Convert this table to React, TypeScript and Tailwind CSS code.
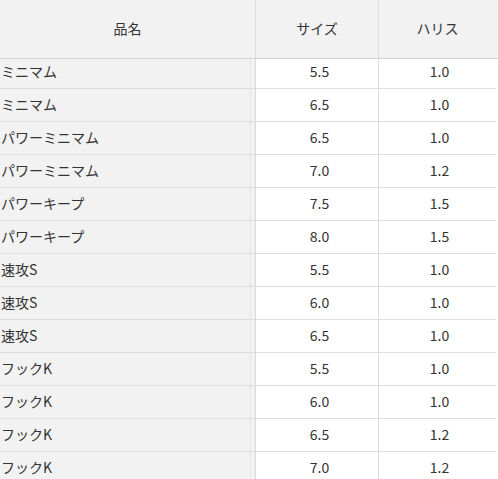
const rows: [string, string, string][] = [
  ['ミニマム', '5.5', '1.0'],
  ['ミニマム', '6.5', '1.0'],
  ['パワーミニマム', '6.5', '1.0'],
  ['パワーミニマム', '7.0', '1.2'],
  ['パワーキープ', '7.5', '1.5'],
  ['パワーキープ', '8.0', '1.5'],
  ['速攻S', '5.5', '1.0'],
  ['速攻S', '6.0', '1.0'],
  ['速攻S', '6.5', '1.0'],
  ['フックK', '5.5', '1.0'],
  ['フックK', '6.0', '1.0'],
  ['フックK', '6.5', '1.2'],
  ['フックK', '7.0', '1.2'],
];

const font = { fontFamily: '"Noto Sans CJK JP", "Noto Sans", sans-serif' };

export default function App() {
  return (
    <div className="w-[498px] h-[479px] overflow-hidden bg-white text-[14px] leading-none text-[#333]" style={font}>
      <div className="flex h-[59px] bg-[#f2f2f2] border-b border-[#d4d4d4]">
        <div className="w-[256px] flex items-center justify-center pb-[3px] border-r border-[#dcdcdc]">品名</div>
        <div className="w-[123px] flex items-center justify-center pb-[3px] border-r border-[#dcdcdc]">サイズ</div>
        <div className="flex-1 flex items-center justify-center pb-[3px] pr-[2px]">ハリス</div>
      </div>
      {rows.map(([name, size, line], i) => {
        const pad = i === 0 ? 'pb-[5px]' : 'pb-[2px]';
        return (
          <div key={i} className={`flex w-[496px] border-b border-[#dddddd] ${i === 0 ? 'h-[30px]' : 'h-[33px]'}`}>
            <div className="w-[256px] flex bg-[#f2f2f2] border-r border-[#d8d8d8]">
              <div className={`flex-1 flex items-center pl-px ${pad}`}>{name}</div>
              <span className="w-px bg-[#e6e6e6] mr-[4px]" />
            </div>
            <div className={`w-[123px] flex items-center justify-center pl-[5px] border-r border-[#dcdcdc] ${pad}`}>{size}</div>
            <div className={`flex-1 flex items-center justify-center pl-[4px] ${pad}`}>{line}</div>
          </div>
        );
      })}
    </div>
  );
}
